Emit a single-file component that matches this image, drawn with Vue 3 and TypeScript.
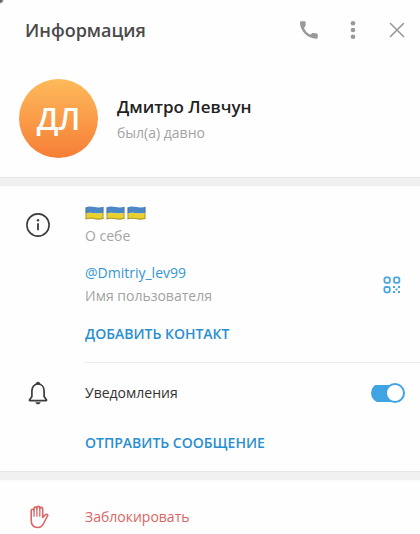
<script setup lang="ts">
import { ref } from 'vue'

const user = {
  name: 'Дмитро Левчун',
  initials: 'ДЛ',
  status: 'был(а) давно',
  username: '@Dmitriy_lev99',
}
const notifications = ref(true)
const flags = [0, 1, 2]
</script>

<template>
  <main class="panel">
    <header class="topbar">
      <h1 class="title">Информация</h1>
      <button class="icon-button" type="button" aria-label="Позвонить">
        <svg width="20" height="20" viewBox="0 0 20 20">
          <path
            d="M2.200 1.200h3c1 0 1.400.5 1.400 1.300v2.600c0 1-.4 1.600-1.700 2.700 1.300 3.300 3.400 5.400 6.600 6.900 1-1.400 1.800-1.900 2.900-1.800l2.600.3c1.200.1 1.700.7 1.700 1.600v2.600c0 .8-.5 1.300-1.400 1.300C8.500 18.700 1 11 1 2.500c0-.8.400-1.300 1.200-1.300z"
            fill="#999"
          />
        </svg>
      </button>
      <button class="icon-button" type="button" aria-label="Ещё">
        <svg width="20" height="20" viewBox="0 0 20 20" fill="#999">
          <circle cx="10" cy="3.300" r="2.300" />
          <circle cx="10" cy="10" r="2.300" />
          <circle cx="10" cy="16.700" r="2.300" />
        </svg>
      </button>
      <button class="icon-button" type="button" aria-label="Закрыть">
        <svg width="20" height="20" viewBox="0 0 20 20">
          <path d="M3.500 3.500l13 13M16.500 3.500l-13 13" stroke="#999" stroke-width="1.600" stroke-linecap="round" />
        </svg>
      </button>
    </header>

    <section class="profile">
      <div class="avatar">{{ user.initials }}</div>
      <div>
        <h2 class="name">{{ user.name }}</h2>
        <p class="caption">{{ user.status }}</p>
      </div>
    </section>

    <section class="details">
      <div class="row about">
        <svg class="row-icon" width="26" height="26" viewBox="0 0 26 26" fill="none">
          <circle cx="13" cy="13" r="11.100" stroke="#3b3b3b" stroke-width="1.600" />
          <path d="M13 11.300v6.900" stroke="#3b3b3b" stroke-width="1.800" />
          <circle cx="13" cy="8.300" r="1.200" fill="#3b3b3b" />
        </svg>
        <div class="row-body">
          <div class="flags" role="img" aria-label="Флаги Украины">
            <svg v-for="flag in flags" :key="flag" width="19" height="14" viewBox="0 0 19 14">
              <path d="M.5 1.500C4-.2 6.500.4 9.500 1s6 .6 9-.3v6.100c-3 1-6 .9-9 .4s-5.500-.8-9 .5z" fill="#4b88c8" />
              <path d="M.5 7.700c3.500-1.300 6-1 9-.5s6 .6 9-.4v5.700c-3 1-6 1-9 .4s-5.500-1-9 .4z" fill="#e8d02e" />
              <path d="M1 1.500v11.300M18 1v11.500" stroke="#555" stroke-opacity=".4" />
              <path d="M.5 13.100c3.500-1.300 6-1 9-.4s6 .6 9-.4" fill="none" stroke="#9b8426" stroke-width=".9" />
            </svg>
          </div>
          <p class="caption">О себе</p>
        </div>
      </div>

      <div class="row username">
        <div class="row-body">
          <a class="link" href="#username">{{ user.username }}</a>
          <p class="caption">Имя пользователя</p>
        </div>
        <button class="icon-button" type="button" aria-label="QR-код">
          <svg width="20" height="20" viewBox="0 0 20 20" fill="none">
            <g stroke="#48a5e0" stroke-width="1.800">
              <rect x="2.400" y="2.400" width="5.400" height="5.400" rx="1.800" />
              <rect x="12" y="2.400" width="5.400" height="5.400" rx="1.800" />
              <rect x="2.400" y="12" width="5.400" height="5.400" rx="1.800" />
            </g>
            <path
              d="M11 11h2v2h-2zM16 11h2v2h-2zM13.500 13.500h2v2h-2zM11 16h2v2h-2zM16 16h2v2h-2z"
              fill="#48a5e0"
            />
          </svg>
        </button>
      </div>

      <div class="row">
        <button class="action" type="button">Добавить контакт</button>
      </div>

      <div class="row notifications">
        <svg class="row-icon" width="26" height="26" viewBox="0 0 26 26" fill="none">
          <path
            d="M6.900 16.500V11c0-4 2.400-7 6.100-7s6.100 3 6.100 7v5.500l2.300 3.300c.3.500.1.900-.4.900H5c-.5 0-.7-.4-.4-.9z"
            stroke="#3b3b3b"
            stroke-width="1.700"
            stroke-linejoin="round"
          />
          <path d="M11 4a2 2 0 0 1 4 0zM10.700 22.500h4.600c-.3 1-1.100 1.500-2.300 1.500s-2-.5-2.300-1.500z" fill="#3b3b3b" stroke="#3b3b3b" stroke-width=".5" />
        </svg>
        <label class="row-body" for="notify">Уведомления</label>
        <input id="notify" v-model="notifications" class="switch" type="checkbox" role="switch" />
      </div>

      <div class="row">
        <button class="action" type="button">Отправить сообщение</button>
      </div>
    </section>

    <section class="danger">
      <button class="block" type="button">
        <svg class="row-icon" width="26" height="26" viewBox="0 0 26 26" fill="none" stroke="#d96565" stroke-linecap="round" stroke-linejoin="round">
          <path
            d="M6.200 14V6.800c0-2.100 2.800-2.100 2.800 0V4.700c0-2.100 2.900-2.100 2.900 0V3.900c0-2.100 2.900-2.100 2.900 0v1c0-2.100 2.900-2.100 2.900 0v8.600l2.500-2.600c1.400-1.400 3.200-.4 2.300 1.100l-3.700 7c-1.200 3-3 4.500-6.100 4.500-4.200 0-6.500-2.600-6.500-7.500z"
            stroke-width="1.600"
          />
          <path d="M9 7v5.200M11.900 4.700v7.500M14.800 4.700v7.500" stroke-width="1.300" />
        </svg>
        <span>Заблокировать</span>
      </button>
    </section>
  </main>
</template>

<style>
body {
  margin: 0;
  background: #fefefe;
}
</style>

<style scoped>
.panel {
  color: #333;
  background: radial-gradient(circle at 0 0, #666 2px, #fefefe 4px);
  font: 14px/20px "Open Sans", "Noto Sans", sans-serif;
}

h1,
h2,
p {
  margin: 0;
}

button {
  padding: 0;
  border: 0;
  background: none;
  font: inherit;
  cursor: pointer;
}

.topbar {
  display: flex;
  align-items: center;
  gap: 24px;
  height: 60px;
  padding: 0 13px 0 25px;
}

.title {
  flex: 1;
  color: #4a4a4a;
  font-size: 18px;
  font-weight: 600;
  line-height: 24px;
}

.icon-button {
  display: grid;
  place-items: center;
  width: 20px;
  height: 20px;
}

.profile {
  display: flex;
  align-items: center;
  gap: 19px;
  padding: 19px 19px 20px;
}

.avatar {
  display: grid;
  place-items: center;
  width: 79px;
  height: 79px;
  border-radius: 50%;
  color: #fff;
  background: linear-gradient(#feba5b, #f67e36);
  font-size: 30px;
  font-weight: 600;
}

.name {
  color: #222;
  font-size: 17px;
  font-weight: 600;
  line-height: 28px;
}

.caption {
  color: #a3a3a3;
  line-height: 24px;
}

.details,
.danger {
  border-top: 8px solid #f0f0f0;
  box-shadow: inset 0 1px #fafafa, 0 -1px #e6e6e6;
}

.details {
  padding: 16px 18px 17px 85px;
}

.row {
  display: flex;
  align-items: center;
  min-height: 24px;
}

.row-body {
  flex: 1;
}

.about {
  margin-bottom: 14px;
}

.about .row-icon,
.notifications .row-icon {
  margin-left: -60px;
  margin-right: 34px;
}

.flags {
  display: flex;
  align-items: center;
  gap: 2px;
  height: 22px;
}

.username {
  margin-bottom: 14px;
}

.link {
  display: block;
  color: #3396d4;
  line-height: 22px;
  text-decoration: none;
}

.action {
  color: #2a8fd0;
  font-weight: 600;
  line-height: 24px;
  text-transform: uppercase;
}

.notifications {
  height: 60px;
  margin: 16px -18px 8px 0;
  padding-right: 15px;
  border-top: 1px solid #ececec;
}

.switch {
  appearance: none;
  display: flex;
  align-items: center;
  justify-content: flex-start;
  width: 34px;
  height: 20px;
  margin: 0;
  background: linear-gradient(#40a4e2, #40a4e2) 0 50% / 30px 17px no-repeat;
  border-radius: 10px;
  cursor: pointer;
}

.switch::before {
  content: "";
  box-sizing: border-box;
  width: 20px;
  height: 20px;
  border: 2px solid #40a4e2;
  border-radius: 50%;
  background: #fff;
}

.switch:checked {
  justify-content: flex-end;
}

.danger {
  padding: 20px 19px 0 25px;
}

.block {
  display: flex;
  align-items: center;
  gap: 34px;
  width: 100%;
  height: 34px;
  color: #db6666;
  text-align: left;
}
</style>
